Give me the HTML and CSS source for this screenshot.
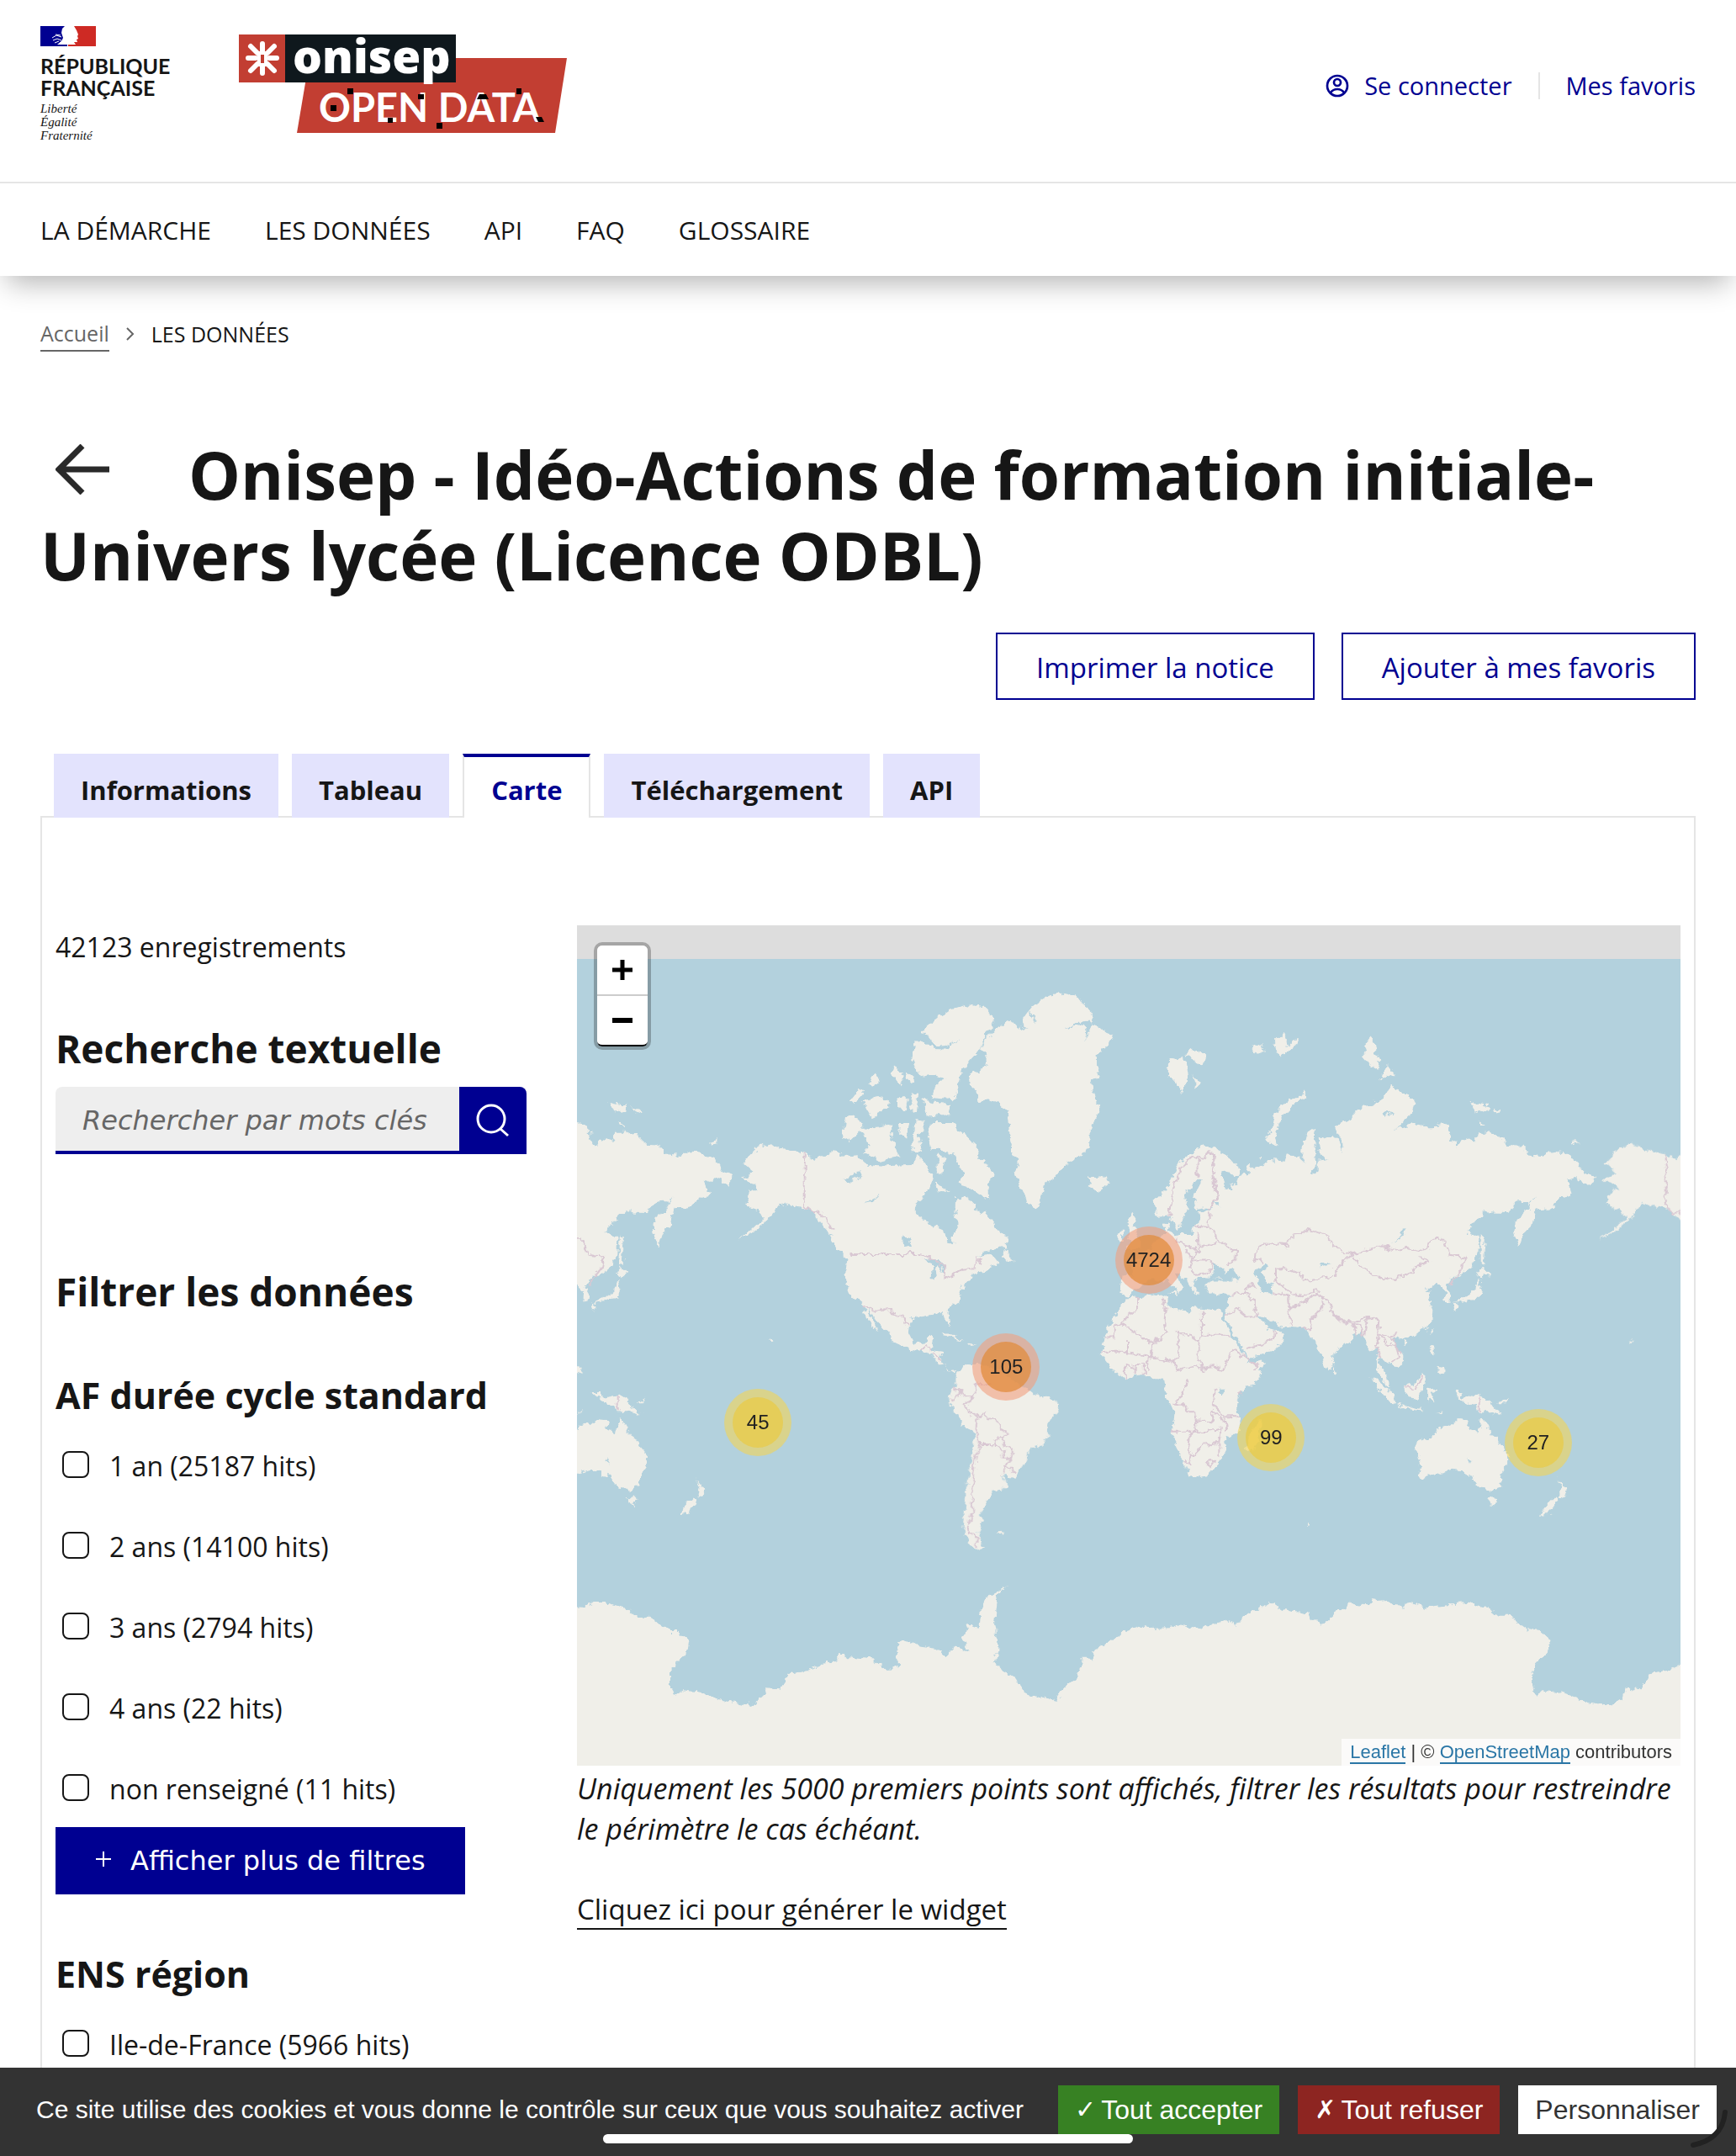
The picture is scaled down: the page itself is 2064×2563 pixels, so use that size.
FILE: index.html
```html
<!DOCTYPE html>
<html lang="fr">
<head>
  <meta charset="UTF-8">
  <meta name="viewport" content="width=device-width, initial-scale=1.0">
  <title>Onisep - Idéo-Actions de formation initiale-Univers lycée (Licence ODBL)</title>
  <link rel="stylesheet" href="styles.css">
</head>
<body>
  <header class="header">
    <div class="header-top">
      <a class="brand" href="#">
        <svg class="flag" viewBox="0 0 66 24" aria-hidden="true">
          <path fill="#fff" d="M0 0h66v24H0z"/>
          <path fill="#000091" d="M0 0h29l-3 3-1 5 2 6-2 4-5 4h12v2H0z"/>
          <path fill="#ce2a24" d="M40 0h26v24H33v-2h9l-2-3h4l-1-3 2-1-1-3 1-2-2-5z"/>
          <path fill="none" stroke="#fff" d="M14 14l5-3 6 2M15 17l5-2 5 2M17 20l5-2M18 10l6 1M22 21l5-4"/>
        </svg>
        <span class="brand-name">RÉPUBLIQUE<br>FRANÇAISE</span>
        <span class="brand-motto">Liberté<br>Égalité<br>Fraternité</span>
      </a>
      <a class="logo" href="#">
        <svg viewBox="0 0 390 117" role="img" aria-label="Onisep Open Data">
          <path fill="#c23e32" d="M84 28h306l-14 89H69z"/>
          <path fill="#c23e32" d="M0 0h55v57H0z"/>
          <path fill="#0f181d" d="M55 0h203v57H55z"/>
          <path stroke="#fff" stroke-width="6" stroke-linecap="round" d="M28 11v9M28 37v9M11 28h9M36 28h9M14 14l8 8M42 14l-8 8M14 43l8-8M42 43l-8-8"/>
          <path fill="none" stroke="#fff" stroke-width="4" d="M24 22h8v14h-8z"/>
          <text class="logo-name" x="64" y="46">onisep</text>
          <text class="logo-sub" x="95" y="104">OPEN DATA</text>
          <path d="M129 64h7v7h-7zM109 84h7v7h-7zM177 99h6v6h-6zM213 71h7v6h-7zM235 105h7v7h-7zM286 71h8l3 6h-14zM330 64h6v7h-6zM353 98h7l3 6h-7z"/>
        </svg>
      </a>
      <div class="header-links">
        <a href="#">
          <svg class="icon-user" viewBox="0 0 24 24" aria-hidden="true"><g fill="none" stroke="currentColor" stroke-width="2"><circle cx="12" cy="12" r="9"/><circle cx="12" cy="9" r="3"/><path d="M6 18c3-4 9-4 12 0"/></g></svg>
          Se connecter
        </a>
        <a href="#">Mes favoris</a>
      </div>
    </div>
    <nav class="nav">
      <a href="#">LA DÉMARCHE</a>
      <a href="#">LES DONNÉES</a>
      <a href="#">API</a>
      <a href="#">FAQ</a>
      <a href="#">GLOSSAIRE</a>
    </nav>
  </header>

  <main class="main">
    <nav class="breadcrumb" aria-label="Fil d'Ariane">
      <a href="#">Accueil</a>
      <svg viewBox="0 0 10 16" aria-hidden="true"><path d="M1 1l7 7-7 7" fill="none" stroke="#666" stroke-width="2"/></svg>
      <span>LES DONNÉES</span>
    </nav>

    <h1><a class="back" href="#" aria-label="Retour"><svg viewBox="0 0 64 60" aria-hidden="true"><path d="M32 2L4 30l28 28M4 30h60" fill="none" stroke="#2a2a2a" stroke-width="7"/></svg></a>Onisep - Idéo-Actions de formation initiale-Univers lycée (Licence ODBL)</h1>

    <div class="actions">
      <button type="button" class="btn">Imprimer la notice</button>
      <button type="button" class="btn">Ajouter à mes favoris</button>
    </div>

    <div class="tabs" role="tablist">
      <button type="button" role="tab">Informations</button>
      <button type="button" role="tab">Tableau</button>
      <button type="button" role="tab" class="active" aria-selected="true">Carte</button>
      <button type="button" role="tab">Téléchargement</button>
      <button type="button" role="tab">API</button>
    </div>

    <section class="panel">
      <aside class="filters">
        <p class="count">42123 enregistrements</p>
        <h2 class="search-title">Recherche textuelle</h2>
        <form class="search">
          <input type="text" placeholder="Rechercher par mots clés" aria-label="Rechercher par mots clés">
          <button type="button" aria-label="Rechercher">
            <svg viewBox="0 0 42 42" aria-hidden="true"><g fill="none" stroke="#fff" stroke-width="3"><circle cx="19" cy="19" r="16"/><path d="M30 31l9 8"/></g></svg>
          </button>
        </form>
        <h2>Filtrer les données</h2>

        <h3>AF durée cycle standard</h3>
        <label class="check"><input type="checkbox"> 1 an (25187 hits)</label>
        <label class="check"><input type="checkbox"> 2 ans (14100 hits)</label>
        <label class="check"><input type="checkbox"> 3 ans (2794 hits)</label>
        <label class="check"><input type="checkbox"> 4 ans (22 hits)</label>
        <label class="check"><input type="checkbox"> non renseigné (11 hits)</label>
        <button type="button" class="more">
          <svg viewBox="0 0 20 20" aria-hidden="true"><path d="M10 1v18M1 10h18" stroke="#fff" stroke-width="2"/></svg>
          Afficher plus de filtres
        </button>

        <h3>ENS région</h3>
        <label class="check"><input type="checkbox"> Ile-de-France (5966 hits)</label>
      </aside>

      <div class="results">
        <div class="map">
          <svg class="map-tiles" viewBox="0 0 1312 999" aria-hidden="true">
            <defs>
              <filter id="coast" x="-20" y="0" width="1352" height="1020" filterUnits="userSpaceOnUse" color-interpolation-filters="sRGB">
                <feTurbulence type="fractalNoise" baseFrequency="0.12" numOctaves="3" seed="4"/>
                <feDisplacementMap in="SourceGraphic" scale="10" xChannelSelector="R" yChannelSelector="G"/>
              </filter>
              <g id="world">
                <!-- Americas -->
                <g transform="translate(-6 -10) scale(.4337 .3827)">
                  <path class="land" d="M470 765L510 715 540 705 570 718 638 738 665 750 725 728 745 745 780 740 810 770 850 775 935 770 950 740 990 800 975 845 945 900 945 925 980 955 1022 975 1030 1010 1042 1020 1045 985 1060 960 1050 920 1052 870 1080 872 1105 890 1115 930 1135 910 1160 970 1195 995 1190 1025 1130 1040 1115 1060 1150 1045 1170 1075 1130 1100 1105 1105 1070 1150 1065 1190 1030 1220 1038 1272 1025 1255 1018 1230 975 1235 930 1245 922 1290 940 1330 965 1325 975 1305 992 1308 985 1345 1015 1350 1012 1385 1030 1410 1055 1405 1045 1415 1010 1390 980 1355 930 1345 875 1315 870 1290 835 1250 808 1215 842 1290 820 1265 795 1205 760 1170 750 1110 755 1060 725 1030 700 975 660 920 635 905 590 895 570 890 540 940 500 975 455 1005 530 935 520 920 475 890 490 850 510 850 500 830 465 815 500 795z"/>
                  <path class="land" d="M1345 237L1385 245 1400 270 1432 300 1425 330 1455 350 1488 365 1470 395 1440 430 1445 480 1425 520 1445 600 1420 660 1418 715 1395 745 1350 770 1320 815 1298 825 1278 908 1250 890 1225 830 1212 790 1225 760 1205 735 1200 670 1190 605 1160 570 1115 572 1110 540 1090 520 1088 495 1135 465 1140 430 1120 410 1160 350 1205 320 1225 345 1240 310 1260 280 1310 245z"/>
                  <path class="land" d="M1030 290L1080 272 1130 280 1162 320 1140 360 1120 410 1095 440 1070 475 1060 520 1050 565 985 560 1000 520 1030 500 990 490 960 500 932 440 940 385 1000 405 960 350 1000 315zM960 565L1040 585 1038 615 970 615zM885 460L905 495 905 525 875 485zM830 485L845 500 830 525 810 520zM790 530L800 545 775 578 760 572zM795 570L850 560 872 590 820 620zM890 560L920 560 915 605 890 590zM930 545L950 560 948 610 930 600zM750 620L785 625 800 655 760 700 740 685zM790 660L850 650 875 640 880 700 900 745 850 760 800 735 820 710zM900 640L925 640 918 695 895 670zM940 630L970 635 950 680 960 735 932 725zM915 480L940 500 930 515 918 505zM985 640L1040 640 1080 680 1110 710 1120 750 1160 800 1140 830 1142 880 1085 840 1055 830 1075 800 1050 740 1020 725 985 720 975 685zM1000 735L1025 750 1015 800 1000 790zM995 820L1035 855 1005 850z"/>
                  <path class="land" d="M1410 805L1440 812 1465 803 1475 825 1440 852 1415 838 1425 825zM1185 1030L1195 1030 1190 1045 1215 1070 1180 1062zM1010 1295L1035 1295 1075 1318 1040 1308zM1085 1318L1110 1328 1090 1330zM375 705L392 695 400 705zM436 852L452 855zM540 1314L550 1320 543 1327z"/>
                  <path class="water" d="M745 815L785 790 790 802 760 825zM800 892L845 865 825 885zM835 920L858 915zM905 990L925 1000 930 1030 912 1015zM960 1065L1000 1058 1020 1085 1022 1110 1005 1080 995 1125 988 1120 992 1080zM968 375L990 410 1030 412 1060 380 1035 398 1000 402zM1350 350L1380 330 1425 325 1410 385 1412 340 1380 338zM1225 310L1245 350 1232 345zM1255 290L1275 330 1262 320z"/>
                  <path class="border" d="M638 738V902L660 920 675 910 712 968M762 1048H942L990 1060 1022 1090 1020 1125 1070 1095 1105 1090 1110 1065 1125 1080M795 1208L830 1222 870 1218 890 1240 905 1240 922 1270M955 1350L968 1330 985 1345M985 1355L1010 1375"/>
                </g>
                <!-- South America -->
                <g transform="translate(-6 500) scale(.4337 .3333)">
                  <path class="land" d="M1085 60L1110 60 1160 80 1250 155 1270 175 1305 180 1335 205 1330 235 1308 270 1305 320 1290 352 1265 360 1248 380 1245 410 1220 455 1210 470 1183 465 1192 500 1180 515 1155 518 1150 540 1135 545 1140 565 1120 600 1130 620 1112 670 1115 690 1132 718 1110 728 1085 700 1070 650 1080 560 1085 480 1098 400 1105 310 1070 280 1035 200 1032 185 1050 145 1055 95zM1168 670L1182 668 1180 678zM1318 706L1327 718z"/>
                  <path class="border" d="M1045 150L1070 165 1040 195M1070 158L1075 178 1100 185 1108 140 1150 135M1100 185L1080 210 1088 240 1110 248 1108 300 1118 350 1155 352 1158 328 1180 328 1188 315 1165 265 1138 258 1132 240 1108 250M1118 350L1105 400 1095 520 1098 590 1082 655 1110 685V718M1155 352L1185 375 1182 398 1205 398 1210 375 1185 350 1180 328M1205 400L1187 428 1183 462M1187 428L1213 450"/>
                </g>
                <!-- Eurasia and northern Africa -->
                <g transform="translate(654 -10) scale(.4337 .3827)">
                  <path class="land" d="M240 715L258 735 285 750 310 785 300 805 270 795 255 790 265 810 270 840 290 850 280 835 300 830 305 805 330 800 335 765 345 785 355 780 395 755 435 760 440 735 470 745 490 765 480 740 482 700 500 660 517 665 515 720 520 770 497 797 510 803 525 790 525 760 550 755 530 735 525 690 540 685 565 680 580 695 590 735 588 690 570 670 572 645 610 635 630 600 690 570 705 560 710 535 728 525 742 545 775 555 787 580 780 610 738 657 760 655 790 640 815 645 825 657 850 655 855 640 885 650 890 690 902 712 925 690 955 697 960 668 990 668 1020 680 1045 708 1085 710 1095 738 1140 742 1160 730 1200 735 1235 760 1255 795 1285 805 1265 835 1250 820 1230 810 1205 820 1218 865 1190 870 1160 905 1120 908 1112 930 1108 960 1085 985 1075 1022 1062 980 1065 945 1090 920 1120 868 1100 895 1090 880 1070 882 1045 920 980 918 960 940 930 980 945 990 965 990 962 1050 940 1090 915 1115 895 1115 875 1150 888 1175 887 1190 870 1193 872 1165 850 1140 838 1140 815 1160 835 1165 825 1185 840 1220 838 1250 815 1285 775 1303 755 1310 740 1300 725 1315 757 1360 757 1380 737 1402 715 1380 695 1370 692 1390 715 1430 722 1460 700 1440 688 1400 685 1345 665 1350 650 1305 645 1285 620 1300 615 1315 568 1355 565 1390 548 1408 535 1370 518 1330 515 1310 500 1310 490 1280 455 1275 415 1270 395 1255 358 1235 385 1280 405 1285 412 1280 432 1300 405 1345 330 1373 320 1345 270 1245 280 1180 290 1172 225 1172 215 1140 235 1130 315 1130 190 1120 180 1145 197 1172 187 1172 165 1130 140 1105 130 1115 155 1145 145 1168 110 1130 60 1130 30 1150 5 1178 -20 1170 -15 1115 20 1110 10 1070 60 1040 90 990 110 985 100 950 118 940 115 975 135 985 185 985 182 960 200 945 195 915 235 905 215 900 190 905 182 870 205 820 190 815 158 860 165 900 150 955 135 970 118 930 85 935 75 880 110 845 140 765 180 730 215 708z"/>
                  <path class="land" d="M-5 1185L35 1182 95 1172 112 1180 112 1210 165 1230 180 1212 265 1225 260 1245 325 1370 330 1388 378 1380 360 1425 310 1480 300 1510 310 1580 130 1580 130 1540 105 1480 100 1440 70 1425 40 1425 -10 1435 -45 1400 -72 1360 -62 1300 -25 1225z"/>
                  <path class="land" d="M0 940L15 925 25 945 20 965 38 1010 35 1030 0 1035 10 1010zM-22 985L-8 975 -10 1010 -22 1012z"/>
                  <path class="land" d="M115 440L140 445 150 435 165 450 170 490 150 550 135 515 115 490zM160 430L185 412 220 430 210 462 185 450zM178 490L198 515 190 532zM340 405L370 392 375 420 352 425zM400 395L430 360 440 400 465 380 465 400 430 430 410 420zM668 375L682 400 680 425 697 450 690 475 665 460 642 430 655 420 650 400zM712 460L732 488 697 505zM942 575L965 580 990 585 988 602 955 610zM1003 592L1028 602 1015 612zM965 635L982 648 968 648zM1215 700L1235 700 1225 710z"/>
                  <path class="land" d="M485 545L492 555 450 590 425 620 415 650 405 685 412 712 395 705 380 688 395 670 410 600 445 570zM358 745L368 745 362 755zM970 985L982 1000 978 1060 985 1075 970 1080zM975 1085L995 1108 970 1120 962 1110zM965 1125L972 1150 965 1185 930 1195 895 1198 930 1180 945 1165 960 1150zM895 1198L905 1205 898 1222 893 1210zM840 1275L842 1290 835 1300 830 1290zM757 1315L768 1320 760 1330zM833 1328L842 1335 840 1360 830 1355zM850 1395L868 1400 868 1422 850 1415zM567 1395L578 1415 568 1425zM112 1165L140 1165 135 1175zM192 1188L215 1188z"/>
                  <path class="water" d="M228 1125L240 1082 262 1090 268 1105 290 1092 312 1125 280 1128 255 1122zM350 1098L385 1075 390 1088 370 1100 380 1130 398 1140 395 1172 370 1170 360 1130zM725 1018L745 1000 755 968 762 975 750 1000zM525 1080L560 1075 545 1085 528 1090zM700 608L730 605 705 625zM240 885L255 890 250 903zM248 1474H268V1482H250z"/>
                  <path class="border" d="M118 930L125 850 150 775 180 745 195 755V810M180 745L210 750 220 730 240 735 235 790 245 880 225 905M225 915V965L245 985 250 1010 300 1040 298 1065 275 1080M195 985L198 1035 180 1060M185 960L225 965M135 990V1010L195 1035M198 1025L245 1010M160 1035L180 1065 170 1090 185 1110 225 1105 235 1075M180 1065H225L240 1085M350 1060L352 1040 378 1018 440 1022 445 995 500 972 548 990 562 1020 615 1048 655 1035 690 1020 740 1035 760 1030 800 1040 825 1030 835 1000 850 995 870 1005 882 1050 925 1055 920 1090 885 1145M615 1048L635 1075 665 1110 725 1128 770 1110 800 1080 828 1070 800 1050M350 1060L370 1078M408 1128V1095L430 1090 475 1110 500 1130 515 1125 570 1118V1095L600 1065 615 1048M400 1130L470 1180 500 1165 525 1160M398 1165L440 1175 445 1240 455 1272M440 1210L485 1200 515 1170 560 1200 558 1225 600 1260 650 1250 675 1240 690 1260 688 1290 720 1305 740 1290M540 1195L530 1220 505 1250 500 1275 480 1280M560 1230L590 1260 640 1268 645 1300M620 1260L630 1300M660 1245L650 1305M690 1295L680 1330 695 1370M700 1300L715 1330 740 1340 745 1370 720 1380M720 1300L735 1330 755 1360M290 1172L325 1170 335 1140 355 1150M325 1170L345 1190 358 1240 330 1240 300 1215 270 1240M325 1340L385 1325 405 1300V1285M95 1180L105 1210 103 1260 110 1290 70 1325 0 1275M140 1290L195 1315 205 1298V1222M205 1298H285M140 1290V1360L130 1380 65 1370 70 1325M195 1318V1370L205 1400 245 1395 265 1410 290 1340M-60 1305H-35V1270L-15 1262 0 1240 30 1215V1182M-15 1262L5 1275M0 1310L0 1350 -70 1350M0 1355L40 1360 65 1370M-5 1435V1395L20 1400M20 1425V1390H48V1425M60 1370L55 1410M130 1380L135 1410 110 1445M135 1410L185 1395 200 1400 240 1440 300 1438 360 1400 290 1340M110 1445H140L160 1440 240 1440M312 1440V1485M245 1440L240 1500 232 1530"/>
                </g>
                <!-- Southern Africa, Indonesia and Oceania -->
                <g transform="translate(654 500) scale(.4464 .3333)">
                  <path class="land" d="M100 90L100 165 122 205 128 250 118 300 135 370 158 440 165 470 215 460 250 405 265 370 262 330 300 300 290 200 300 165 350 120 360 90zM345 275L358 270 350 340 330 380 318 360 325 315z"/>
                  <path class="land" d="M765 350L820 318 835 285 850 278 862 285 885 258 910 262 905 290 935 308 945 250 970 315 985 330 995 355 1015 385 1015 420 1000 450 995 500 970 512 935 505 920 470 900 460 895 445 865 440 830 455 790 473 775 465 780 430zM962 540L987 542 980 568 970 565zM1145 475L1160 500 1178 508 1158 545 1150 535 1155 510zM1138 538L1148 548 1125 600 1102 602 1110 580z"/>
                  <path class="land" d="M648 110L680 135 712 175 715 205 700 200 670 150zM712 205L750 215 790 228 780 232 735 222zM738 145L765 135 785 100 798 108 788 150 778 188 755 185 740 170zM800 155L830 150 808 165 822 200 805 185 800 200zM870 165L890 165 895 185 940 175 965 195 980 225 998 245 965 235 935 235 930 210 900 200zM800 235L820 230zM825 242L848 228 838 240zM845 183L870 182zM852 140L858 160zM985 205L1015 185 1005 205zM1025 210L1065 245M478 637L488 637 483 648zM668 90L680 95 700 145 690 135z"/>
                  <path class="water" d="M242 155L262 155 255 178 243 170zM908 400L918 405 914 420zM912 455L920 460 916 485z"/>
                  <path class="border" d="M938 178V232M740 148L770 150 785 110M122 205L155 212 160 235 182 235 185 305H118M182 265L225 268 230 230 262 275 265 300M160 120L145 180 125 205M215 305L250 295 245 345 205 350 175 390 165 385 170 310 215 305M170 390L165 420 150 410M245 345L245 400M213 420L222 408 228 420 220 432zM232 160L228 210 258 250 298 250M258 250L262 280"/>
                </g>
              </g>
            </defs>
            <path class="sky" d="M0 0h1312v999H0z"/>
            <path class="water" d="M0 40h1312v959H0z"/>
            <g filter="url(#coast)">
              <use href="#world"/>
              <use href="#world" x="-1024"/>
              <use href="#world" x="1024"/>
              <path class="land" transform="translate(-6 500) scale(.4337 .3333)" d="M-60 925L45 930 60 915 90 915 150 935 175 965 210 965 270 1020 290 1020 322 1050 315 1100 285 1130 272 1170 272 1220 285 1250 300 1230 360 1240 410 1265 480 1280 490 1285 525 1250 530 1222 570 1225 595 1170 650 1158 690 1130 725 1125 735 1095 760 1108 830 1118 852 1152 895 1150 890 1060 930 1052 950 1072 1000 1080 1028 1108 1050 1070 1090 1088 1070 1050 1085 990 1115 1005 1120 940 1145 890 1195 858 1160 895 1165 920 1160 990 1170 1080 1160 1140 1210 1180 1240 1235 1275 1258 1295 1250 1328 1262 1350 1220 1385 1180 1400 1115 1425 1115 1435 1080 1480 1050 1510 1018 1550 1012 1568 995V1560H-60z"/>
              <path class="land" transform="translate(654 500) scale(.4464 .3333)" d="M0 1015L35 1000 60 1005 115 1003 135 993 200 1010 255 975 290 998 310 965 355 935 380 912 410 938 480 955 487 975 510 985 518 998 545 960 590 920 645 925 655 895 665 912 695 908 735 932 760 912 790 935 850 925 860 932 870 918 910 915 965 938 990 965 1020 965 1070 1015 1100 1020 1128 1050 1115 1100 1090 1130 1080 1170 1080 1220 1092 1250 1105 1228 1165 1240 1220 1268 1290 1285 1325 1250 1330 1220 1370 1225 1390 1168 1440 1158 1500 1122 1540 1110V1560H0z"/>
            </g>
          </svg>
          <div class="zoom">
            <button type="button" aria-label="Zoom avant"><svg viewBox="0 0 24 24" aria-hidden="true"><path d="M12 0v24M0 12h24" stroke="#000" stroke-width="5"/></svg></button>
            <button type="button" aria-label="Zoom arrière"><svg viewBox="0 0 24 24" aria-hidden="true"><path d="M0 12h24" stroke="#000" stroke-width="6"/></svg></button>
          </div>
          <div class="cluster large" style="left: 51.8%; top: 39.8%"><span>4724</span></div>
          <div class="cluster large" style="left: 38.9%; top: 52.6%"><span>105</span></div>
          <div class="cluster small" style="left: 16.4%; top: 59.2%"><span>45</span></div>
          <div class="cluster small" style="left: 62.9%; top: 61%"><span>99</span></div>
          <div class="cluster small" style="left: 87.1%; top: 61.6%"><span>27</span></div>
          <div class="attribution"><a href="#">Leaflet</a> | © <a href="#">OpenStreetMap</a> contributors</div>
        </div>
        <p class="note">Uniquement les 5000 premiers points sont affichés, filtrer les résultats pour restreindre le périmètre le cas échéant.</p>
        <a class="widget" href="#">Cliquez ici pour générer le widget</a>
      </div>
    </section>
  </main>

  <div class="cookies">
    <span class="cookies-text">Ce site utilise des cookies et vous donne le contrôle sur ceux que vous souhaitez activer</span>
    <button type="button" class="accept"><span class="mark">✓</span>Tout accepter</button>
    <button type="button" class="refuse"><span class="mark">✗</span>Tout refuser</button>
    <button type="button" class="custom">Personnaliser</button>
    <div class="home-bar"></div>
    <svg class="corner" viewBox="0 0 48 48" aria-hidden="true"><path d="M43 4Q40 36 5 43" fill="none" stroke="#222" stroke-width="6" stroke-linecap="round"/></svg>
  </div>
</body>
</html>
```
FILE: styles.css
```css
* {
  box-sizing: border-box;
}
body {
  margin: 0;
  background: #fff;
  color: #161616;
  font-family: "Open Sans", sans-serif;
  font-size: 32px;
  line-height: 48px;
}
a {
  color: inherit;
  text-decoration: none;
}
button,
input {
  font: inherit;
  margin: 0;
}
svg {
  display: block;
}

/* header */
.header {
  box-shadow: 0 16px 32px -8px rgba(0, 0, 0, 0.3);
}
.header-top {
  display: flex;
  align-items: flex-start;
  height: 218px;
  padding: 31px 48px 0;
  border-bottom: 2px solid #e5e5e5;
}
.brand {
  width: 236px;
}
.flag {
  width: 66px;
  height: 24px;
}
.brand-name {
  display: block;
  margin-top: 10px;
  font-family: Lato, sans-serif;
  font-size: 25px;
  font-weight: bold;
  line-height: 26px;
}
.brand-motto {
  display: block;
  margin-top: 4px;
  font-family: "Liberation Serif", serif;
  font-size: 15px;
  font-style: italic;
  line-height: 16px;
}
.logo {
  width: 390px;
  margin-top: 10px;
}
.logo svg {
  overflow: visible;
}
.logo-name {
  fill: #fff;
  font-size: 55px;
  font-weight: 800;
}
.logo-sub {
  fill: #fff;
  font-family: Lato, sans-serif;
  font-size: 47px;
  font-weight: bold;
}
.header-links {
  display: flex;
  margin: 47px 0 0 auto;
  color: #000091;
  font-size: 29px;
  line-height: 48px;
}
.header-links a {
  display: flex;
  align-items: center;
}
.header-links a + a {
  position: relative;
  margin-left: 32px;
  padding-left: 32px;
}
.header-links a + a::before {
  content: "";
  position: absolute;
  left: 0;
  width: 2px;
  height: 32px;
  background: #e5e5e5;
}
.icon-user {
  width: 32px;
  height: 32px;
  margin-right: 16px;
}
.nav {
  display: flex;
  gap: 64px;
  height: 110px;
  padding: 0 48px;
  font-size: 30px;
  line-height: 112px;
}

/* page */
.main {
  padding: 0 48px;
}
.breadcrumb {
  display: flex;
  align-items: center;
  gap: 20px;
  padding-top: 48px;
  font-size: 25px;
  line-height: 40px;
}
.breadcrumb a {
  color: #666;
  border-bottom: 2px solid #666;
}
.breadcrumb svg {
  width: 10px;
  height: 16px;
}
h1 {
  margin: 98px 0 44px;
  font-size: 78px;
  line-height: 96px;
}
.back {
  display: inline-block;
  width: 176px;
  padding: 0 0 6px 18px;
}
.back svg {
  width: 64px;
  height: 60px;
}
.actions {
  display: flex;
  justify-content: flex-end;
  gap: 32px;
}
.btn {
  height: 80px;
  padding: 4px 46px 0;
  background: none;
  border: 2px solid #000091;
  color: #000091;
  font-size: 33px;
}
.tabs {
  display: flex;
  gap: 16px;
  padding: 0 16px;
  margin-top: 64px;
}
.tabs button {
  position: relative;
  height: 76px;
  margin-bottom: -2px;
  padding: 10px 32px 0;
  background: #e3e3fd;
  border: none;
  color: #161616;
  font-size: 31px;
  font-weight: bold;
}
.tabs .active {
  padding: 6px 32px 0;
  background: #fff;
  border: 2px solid #e5e5e5;
  border-top: 4px solid #000091;
  border-bottom: none;
  color: #000091;
}
.panel {
  display: grid;
  grid-template-columns: 560px 1fr;
  gap: 60px;
  padding: 128px 16px 128px;
  border: 2px solid #e5e5e5;
}

/* filters */
.count {
  margin: 2px 0 0;
}
h2,
h3 {
  margin: 0;
  line-height: 64px;
}
h2 {
  font-size: 46px;
}
h3 {
  font-size: 43px;
}
.search-title {
  margin-top: 64px;
}
.search {
  display: flex;
  height: 80px;
  margin: 14px 0 131px;
}
.search input {
  flex: 1;
  min-width: 0;
  padding: 4px 32px 0;
  background: #eee;
  border: none;
  border-bottom: 4px solid #000091;
  border-radius: 8px 0 0 0;
  font-family: "DejaVu Sans", sans-serif;
  font-style: italic;
}
.search input::placeholder {
  color: #666;
  opacity: 1;
}
.search button {
  width: 80px;
  padding: 0 19px;
  background: #000091;
  border: none;
  border-radius: 0 8px 0 0;
}
.search svg {
  width: 42px;
  height: 42px;
}
.filters h2 + h3 {
  margin: 60px 0 28px;
}
.check {
  display: flex;
  align-items: center;
  gap: 24px;
  height: 48px;
  padding-left: 8px;
  margin-bottom: 48px;
}
.check input {
  appearance: none;
  width: 32px;
  height: 32px;
  margin-bottom: 4px;
  border: 2px solid #161616;
  border-radius: 8px;
}
.more {
  display: flex;
  align-items: center;
  gap: 22px;
  height: 80px;
  padding: 0 47px;
  margin: -27px 0 63px;
  background: #000091;
  border: none;
  color: #fff;
  font-family: "DejaVu Sans", sans-serif;
}
.more svg {
  width: 20px;
  height: 20px;
  margin-bottom: 4px;
}
.more + h3 {
  margin-bottom: 28px;
}

/* map */
.map {
  position: relative;
  overflow: hidden;
  font-family: "Liberation Sans", sans-serif;
}
.map-tiles {
  width: 100%;
}
.sky {
  fill: #ddd;
}
.water {
  fill: #b3d1dd;
}
.land {
  fill: #f0efe9;
}
.border {
  fill: none;
  stroke: #d9c8d3;
  stroke-width: 2;
  vector-effect: non-scaling-stroke;
}
.zoom {
  position: absolute;
  top: 20px;
  left: 20px;
  border: 4px solid rgba(0, 0, 0, 0.25);
  border-radius: 10px;
}
.zoom button {
  display: flex;
  align-items: center;
  justify-content: center;
  width: 60px;
  height: 60px;
  padding: 0;
  background: #fff;
  border: none;
  border-bottom: 2px solid #ccc;
  border-radius: 6px 6px 0 0;
}
.zoom button + button {
  border-color: #000;
  border-radius: 0 0 6px 6px;
}
.zoom svg {
  width: 24px;
  height: 24px;
}
.cluster {
  position: absolute;
  width: 80px;
  height: 80px;
  margin: -40px 0 0 -40px;
  padding: 10px;
  border-radius: 50%;
  color: #222;
  font-size: 24px;
  line-height: 60px;
  text-align: center;
}
.cluster span {
  display: block;
  border-radius: 50%;
}
.small {
  background: rgba(241, 211, 87, 0.6);
}
.small span {
  background: rgba(236, 200, 55, 0.6);
}
.large {
  background: rgba(241, 158, 126, 0.6);
}
.large span {
  background: rgba(226, 139, 60, 0.75);
}
.attribution {
  position: absolute;
  right: 0;
  bottom: 0;
  padding: 0 10px;
  background: rgba(255, 255, 255, 0.7);
  color: #333;
  font-size: 22px;
  line-height: 32px;
}
.attribution a {
  color: #2a76a6;
  border-bottom: 2px solid #2a76a6;
}
.note {
  margin: 3px 0 48px;
  font-size: 34px;
  font-style: italic;
}
.widget {
  border-bottom: 2px solid #161616;
  font-size: 33px;
}

/* cookies */
.cookies {
  position: fixed;
  right: 0;
  bottom: 0;
  left: 0;
  display: flex;
  gap: 22px;
  height: 105px;
  padding: 21px 23px 25px 43px;
  background: #333;
  color: #fff;
  font-family: "Liberation Sans", sans-serif;
  font-size: 30px;
  line-height: 58px;
}
.cookies-text {
  margin-right: auto;
  white-space: nowrap;
}
.cookies button {
  display: flex;
  gap: 6px;
  height: 58px;
  padding: 0 20px;
  border: none;
  color: #fff;
  font-size: 32px;
  white-space: nowrap;
}
.mark {
  font-family: "DejaVu Sans", sans-serif;
  font-size: 30px;
}
.cookies .accept {
  background: #378123;
}
.cookies .refuse {
  background: #8d2521;
}
.cookies .custom {
  background: #fff;
  color: #333;
}
.home-bar {
  position: absolute;
  bottom: 15px;
  left: 50%;
  width: 630px;
  height: 11px;
  margin-left: -315px;
  background: #fff;
  border-radius: 6px;
}
.corner {
  position: absolute;
  right: 8px;
  bottom: 8px;
  width: 48px;
  height: 48px;
}
```
